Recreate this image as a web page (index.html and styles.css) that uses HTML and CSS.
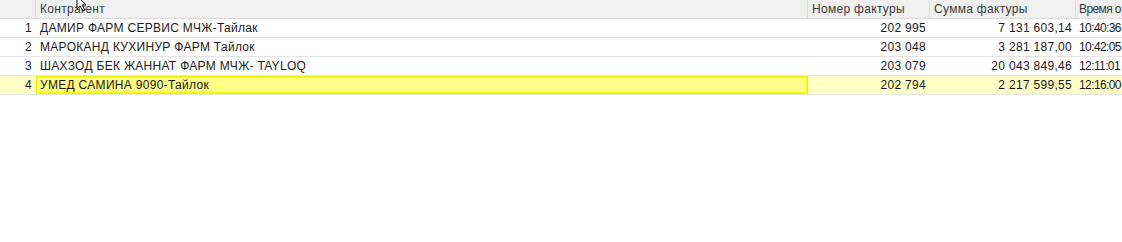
FILE: index.html
```html
<!DOCTYPE html>
<html lang="ru">
<head>
<meta charset="utf-8">
<link rel="stylesheet" href="styles.css">
</head>
<body>
<div class="grid">
  <div class="row head">
    <div class="c num"></div>
    <div class="c name">Контрагент</div>
    <div class="c inv">Номер фактуры</div>
    <div class="c sum">Сумма фактуры</div>
    <div class="c time">Время о</div>
  </div>
  <div class="row">
    <div class="c num">1</div>
    <div class="c name">ДАМИР ФАРМ СЕРВИС МЧЖ-Тайлак</div>
    <div class="c inv">202 995</div>
    <div class="c sum">7 131 603,14</div>
    <div class="c time">10:40:36</div>
  </div>
  <div class="row">
    <div class="c num">2</div>
    <div class="c name">МАРОКАНД КУХИНУР ФАРМ Тайлок</div>
    <div class="c inv">203 048</div>
    <div class="c sum">3 281 187,00</div>
    <div class="c time">10:42:05</div>
  </div>
  <div class="row">
    <div class="c num">3</div>
    <div class="c name">ШАХЗОД БЕК ЖАННАТ ФАРМ МЧЖ- TAYLOQ</div>
    <div class="c inv">203 079</div>
    <div class="c sum">20 043 849,46</div>
    <div class="c time">12:11:01</div>
  </div>
  <div class="row sel">
    <div class="c num">4</div>
    <div class="c name focus">УМЕД САМИНА 9090-Тайлок</div>
    <div class="c inv">202 794</div>
    <div class="c sum">2 217 599,55</div>
    <div class="c time">12:16:00</div>
  </div>
</div>
<svg class="cursor" width="14" height="12" viewBox="0 0 14 12">
  <path d="M1 -4 L1 9 L4 6 L7 11 L9 10 L6 5 L10 5 Z" fill="#fff" stroke="#000" stroke-width="1"/>
</svg>
</body>
</html>
```
FILE: styles.css
```css
html, body {
  margin: 0;
  padding: 0;
  background: #fff;
}
body {
  width: 1122px;
  height: 242px;
  overflow: hidden;
  position: relative;
  font-family: "Liberation Sans", Arial, sans-serif;
  font-size: 12px;
  letter-spacing: 0.3px;
  color: #1a1a1a;
}
.grid {
  display: flex;
  flex-direction: column;
  width: 1122px;
}
.row {
  display: grid;
  grid-template-columns: 36px 772px 122px 146px 46px;
  height: 18px;
  border-bottom: 1px solid #e4e4e4;
  line-height: 18px;
}
.row.head {
  height: 18px;
  background: #f0f0f0;
  border-bottom: 1px solid #d9d9d9;
  color: #3a3a3a;
}
.c {
  padding: 0 4px;
  white-space: nowrap;
  overflow: hidden;
  box-sizing: border-box;
}
.head .c {
  border-right: 1px solid #dcdcdc;
  text-align: left;
}
.head .c.time {
  border-right: none;
}
.num { text-align: right; padding-right: 4px; }
.inv, .sum { text-align: right; }
.c.time {
  padding: 0 0 0 3px;
  letter-spacing: -0.6px;
  overflow: visible;
}
.row.sel { background: #ffffc8; }
.focus {
  background: #ffff88;
  border: 1px solid #f2f200;
  box-shadow: inset 0 0 0 1px #ffff00;
  line-height: 16px;
  padding-left: 3px;
}
.cursor {
  position: absolute;
  left: 76px;
  top: 0;
}
```
